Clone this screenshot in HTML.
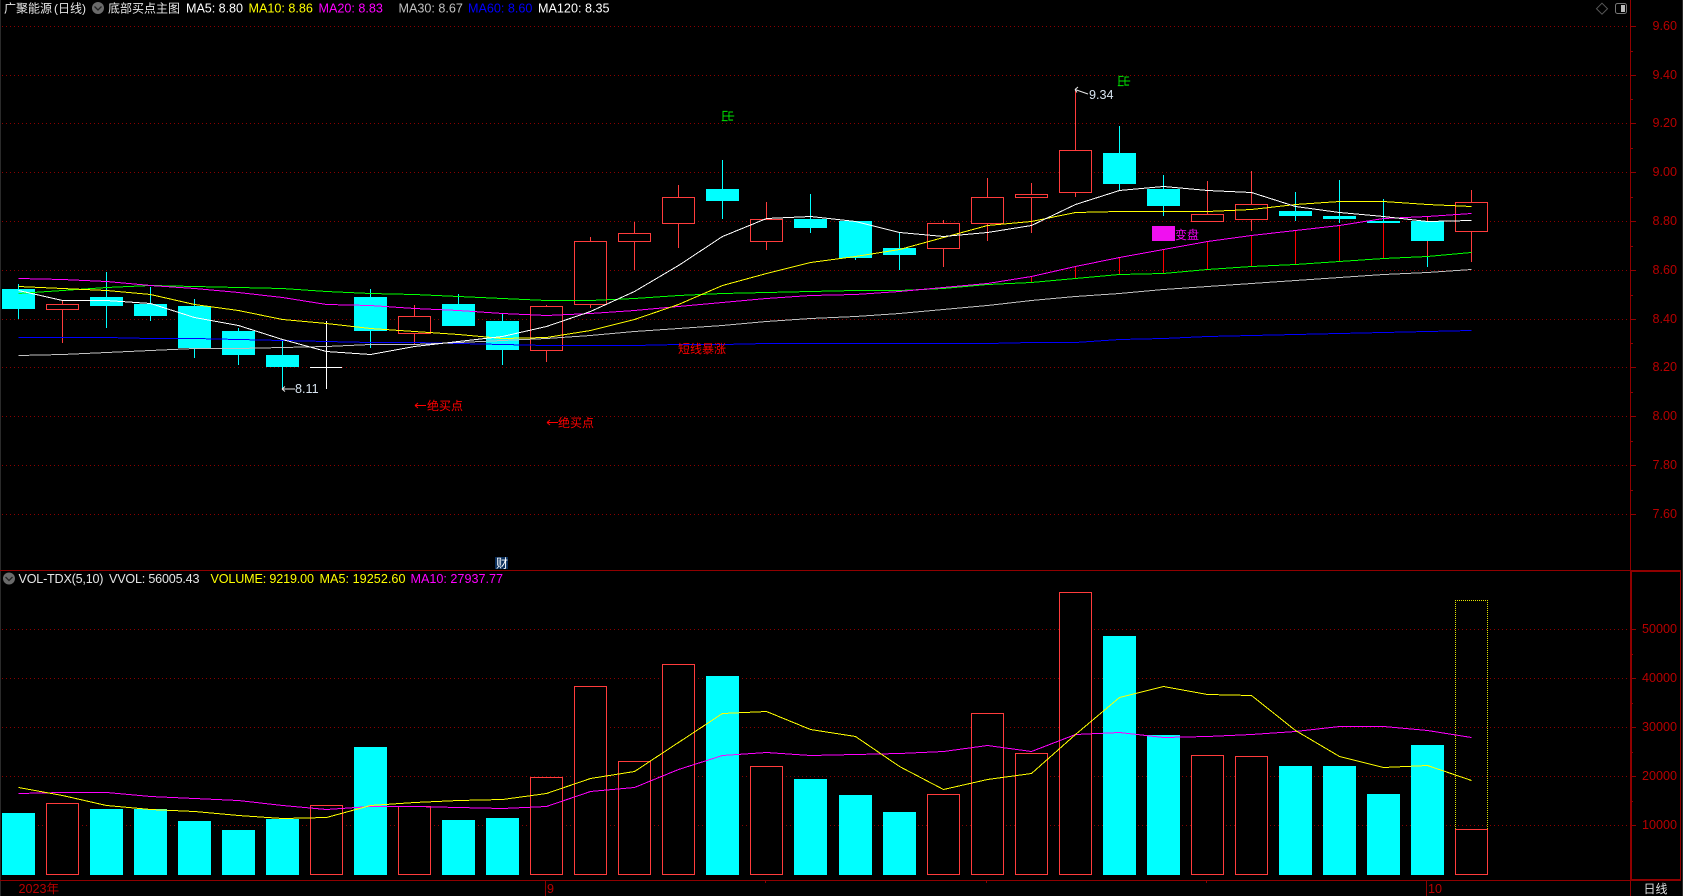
<!DOCTYPE html>
<html><head><meta charset="utf-8"><title>广聚能源</title>
<style>
html,body{margin:0;padding:0;background:#000;width:1683px;height:896px;overflow:hidden}
svg{display:block;position:absolute;left:0;top:0}
text{font-family:"Liberation Sans","WenQuanYi Zen Hei","Noto Sans CJK SC",sans-serif;font-size:12.6px}
.cj{font-size:12px}
.ax{fill:#b80000;text-anchor:end}
</style></head><body>
<svg width="1683" height="896" viewBox="0 0 1683 896" xmlns="http://www.w3.org/2000/svg">
<rect width="1683" height="896" fill="#000"/>
<rect x="0" y="0" width="1" height="896" fill="#2a2a2a"/>
<rect x="1682" y="0" width="1" height="896" fill="#2a2a2a"/>
<!-- grid -->
<g stroke="#8b0000" stroke-width="1" stroke-dasharray="1 3" shape-rendering="crispEdges">
<path d="M2 26.5H1630M2 75.5H1630M2 123.5H1630M2 172.5H1630M2 221.5H1630M2 270.5H1630M2 319.5H1630M2 367.5H1630M2 416.5H1630M2 465.5H1630M2 514.5H1630"/>
<path d="M2 629.5H1630M2 678.5H1630M2 727.5H1630M2 776.5H1630M2 825.5H1630"/>
</g>
<!-- frame -->
<g stroke="#900000" stroke-width="1" fill="none" shape-rendering="crispEdges">
<path d="M0 570.5H1681M0 880.5H1681M1630.5 0V896"/>
<path d="M1631.5 570V881M1631 571.5H1681M1680.5 570V881M1631 879.5H1681"/>
<path d="M1630 26.5H1636M1630 75.5H1636M1630 123.5H1636M1630 172.5H1636M1630 221.5H1636M1630 270.5H1636M1630 319.5H1636M1630 367.5H1636M1630 416.5H1636M1630 465.5H1636M1630 514.5H1636"/>
<path d="M1630 51.5H1633M1630 99.5H1633M1630 148.5H1633M1630 197.5H1633M1630 246.5H1633M1630 295.5H1633M1630 343.5H1633M1630 392.5H1633M1630 441.5H1633M1630 490.5H1633"/>
<path d="M1630 629.5H1636M1630 678.5H1636M1630 727.5H1636M1630 776.5H1636M1630 825.5H1636"/>
<path d="M1630 654.5H1633M1630 703.5H1633M1630 752.5H1633M1630 801.5H1633"/>
<path d="M545.5 880V896M1426.5 880V896M765.5 880V883M986.5 880V883M1206.5 880V883"/>
</g>
<!-- red sticks between MA20 and MA30 -->
<path shape-rendering="crispEdges" stroke="#ff0000" fill="none" d="M987.5 283V285M1031.5 276V282M1075.5 266V278M1119.5 258V274M1163.5 249V273M1207.5 242V269M1251.5 235V266M1295.5 231V264M1339.5 226V261M1383.5 218V258M1427.5 216V256"/>
<!-- wicks cyan -->
<path shape-rendering="crispEdges" stroke="#00ffff" fill="none" d="M18.5 284V319M106.5 272V328M150.5 287V321M194.5 299V358M238.5 328V365M282.5 339V389M370.5 289V348M458.5 294V326M502.5 313V365M722.5 160V219M810.5 194V233M855.5 221V260M899.5 232V270M1119.5 126V190M1163.5 175V216M1295.5 192V221M1339.5 180V223M1383.5 199V223M1427.5 256V267"/>
<!-- wicks red -->
<path shape-rendering="crispEdges" stroke="#ff3c3c" fill="none" d="M62.5 301V343M414.5 305V344M546.5 305V362M590.5 237V308M634.5 222V270M678.5 185V248M766.5 202V250M943.5 220V267M987.5 178V241M1031.5 183V233M1075.5 90V197M1207.5 181V214M1251.5 171V231M1471.5 190V262M1427.5 216V256"/>
<!-- cyan bodies -->
<path shape-rendering="crispEdges" fill="#00ffff" d="M2 289h33v20h-33zM90 297h33v9h-33zM134 304h33v12h-33zM178 306h33v42h-33zM222 331h33v24h-33zM266 355h33v12h-33zM354 297h33v34h-33zM442 304h33v22h-33zM486 321h33v29h-33zM706 189h33v12h-33zM794 219h33v9h-33zM839 221h33v37h-33zM883 248h33v7h-33zM1103 153h33v31h-33zM1147 189h33v17h-33zM1279 211h33v5h-33zM1323 216h33v3h-33zM1367 221h33v2h-33zM1411 221h33v20h-33z"/>
<!-- hollow red bodies -->
<g shape-rendering="crispEdges" fill="#000" stroke="#ff3c3c">
<rect x="46.5" y="304.5" width="32" height="5"/>
<rect x="398.5" y="316.5" width="32" height="17"/>
<rect x="530.5" y="306.5" width="32" height="44"/>
<rect x="574.5" y="241.5" width="32" height="63"/>
<rect x="618.5" y="233.5" width="32" height="8"/>
<rect x="662.5" y="197.5" width="32" height="26"/>
<rect x="750.5" y="219.5" width="32" height="22"/>
<rect x="927.5" y="223.5" width="32" height="25"/>
<rect x="971.5" y="197.5" width="32" height="26"/>
<rect x="1015.5" y="194.5" width="32" height="3"/>
<rect x="1059.5" y="150.5" width="32" height="42"/>
<rect x="1191.5" y="214.5" width="32" height="7"/>
<rect x="1235.5" y="204.5" width="32" height="15"/>
<rect x="1455.5" y="202.5" width="32" height="29"/>
</g>
<!-- current price cross -->
<path shape-rendering="crispEdges" stroke="#fff" fill="none" d="M310 367.5H342M326.5 321V389"/>
<!-- MAs -->
<g fill="none" stroke-width="1" shape-rendering="crispEdges">
<polyline stroke="#0000ff" points="18.5,337.5 62.5,337.5 106.5,337.5 150.5,338.5 194.5,338.5 238.5,339.5 282.5,340.5 326.5,341.5 370.5,342.5 414.5,342.5 458.5,343.5 502.5,344.5 546.5,345.5 590.5,345.5 634.5,345.5 678.5,344.5 722.5,344.5 766.5,343.5 810.5,343.5 855.5,343.5 899.5,343.5 943.5,343.5 987.5,343.5 1031.5,342.5 1075.5,342.5 1119.5,339.5 1163.5,338.5 1207.5,336.5 1251.5,335.5 1295.5,334.5 1339.5,333.5 1383.5,332.5 1427.5,331.5 1471.5,330.5"/>
<polyline stroke="#c0c0c0" points="18.5,355.5 62.5,354.5 106.5,352.5 150.5,350.5 194.5,348.5 238.5,348.5 282.5,347.5 326.5,346.5 370.5,344.5 414.5,344.5 458.5,342.5 502.5,340.5 546.5,338.5 590.5,335.5 634.5,331.5 678.5,328.5 722.5,325.5 766.5,321.5 810.5,318.5 855.5,316.5 899.5,313.5 943.5,309.5 987.5,305.5 1031.5,300.5 1075.5,296.5 1119.5,293.5 1163.5,289.5 1207.5,286.5 1251.5,283.5 1295.5,280.5 1339.5,277.5 1383.5,274.5 1427.5,272.5 1471.5,269.5"/>
<polyline stroke="#00ff00" points="18.5,293.5 62.5,290.5 106.5,287.5 150.5,285.5 194.5,286.5 238.5,287.5 282.5,288.5 326.5,291.5 370.5,293.5 414.5,294.5 458.5,296.5 502.5,298.5 546.5,300.5 590.5,300.5 634.5,298.5 678.5,295.5 722.5,293.5 766.5,292.5 810.5,291.5 855.5,290.5 899.5,290.5 943.5,288.5 987.5,284.5 1031.5,282.5 1075.5,278.5 1119.5,274.5 1163.5,273.5 1207.5,269.5 1251.5,266.5 1295.5,264.5 1339.5,261.5 1383.5,258.5 1427.5,256.5 1471.5,252.5"/>
<polyline stroke="#ff00ff" points="18.5,278.5 62.5,279.5 106.5,281.5 150.5,285.5 194.5,288.5 238.5,292.5 282.5,297.5 326.5,304.5 370.5,305.5 414.5,308.5 458.5,310.5 502.5,313.5 546.5,315.5 590.5,313.5 634.5,310.5 678.5,306.5 722.5,302.5 766.5,298.5 810.5,295.5 855.5,294.5 899.5,291.5 943.5,287.5 987.5,283.5 1031.5,276.5 1075.5,266.5 1119.5,257.5 1163.5,249.5 1207.5,241.5 1251.5,235.5 1295.5,230.5 1339.5,225.5 1383.5,218.5 1427.5,216.5 1471.5,213.5"/>
<polyline stroke="#ffff00" points="18.5,286.5 62.5,288.5 106.5,290.5 150.5,294.5 194.5,304.5 238.5,310.5 282.5,319.5 326.5,323.5 370.5,328.5 414.5,331.5 458.5,334.5 502.5,338.5 546.5,337.5 590.5,330.5 634.5,319.5 678.5,304.5 722.5,285.5 766.5,273.5 810.5,262.5 855.5,256.5 899.5,249.5 943.5,237.5 987.5,225.5 1031.5,221.5 1075.5,212.5 1119.5,211.5 1163.5,211.5 1207.5,211.5 1251.5,209.5 1295.5,204.5 1339.5,201.5 1383.5,201.5 1427.5,204.5 1471.5,206.5"/>
<polyline stroke="#ffffff" points="18.5,290.5 62.5,300.5 106.5,300.5 150.5,303.5 194.5,317.5 238.5,325.5 282.5,339.5 326.5,351.5 370.5,354.5 414.5,346.5 458.5,341.5 502.5,336.5 546.5,326.5 590.5,311.5 634.5,291.5 678.5,265.5 722.5,236.5 766.5,218.5 810.5,216.5 855.5,221.5 899.5,232.5 943.5,236.5 987.5,232.5 1031.5,225.5 1075.5,204.5 1119.5,190.5 1163.5,186.5 1207.5,190.5 1251.5,192.5 1295.5,206.5 1339.5,212.5 1383.5,216.5 1427.5,221.5 1471.5,220.5"/>
</g>
<!-- volume bars -->
<path shape-rendering="crispEdges" fill="#00ffff" d="M2 813h33v62h-33zM90 809h33v66h-33zM134 809h33v66h-33zM178 821h33v54h-33zM222 830h33v45h-33zM266 819h33v56h-33zM354 747h33v128h-33zM442 820h33v55h-33zM486 818h33v57h-33zM706 676h33v199h-33zM794 779h33v96h-33zM839 795h33v80h-33zM883 812h33v63h-33zM1103 636h33v239h-33zM1147 735h33v140h-33zM1279 766h33v109h-33zM1323 766h33v109h-33zM1367 794h33v81h-33zM1411 745h33v130h-33z"/>
<g shape-rendering="crispEdges" fill="#000" stroke="#ff3c3c">
<rect x="46.5" y="803.5" width="32" height="71"/>
<rect x="310.5" y="805.5" width="32" height="69"/>
<rect x="398.5" y="806.5" width="32" height="68"/>
<rect x="530.5" y="777.5" width="32" height="97"/>
<rect x="574.5" y="686.5" width="32" height="188"/>
<rect x="618.5" y="761.5" width="32" height="113"/>
<rect x="662.5" y="664.5" width="32" height="210"/>
<rect x="750.5" y="766.5" width="32" height="108"/>
<rect x="927.5" y="794.5" width="32" height="80"/>
<rect x="971.5" y="713.5" width="32" height="161"/>
<rect x="1015.5" y="753.5" width="32" height="121"/>
<rect x="1059.5" y="592.5" width="32" height="282"/>
<rect x="1191.5" y="755.5" width="32" height="119"/>
<rect x="1235.5" y="756.5" width="32" height="118"/>
</g>
<path shape-rendering="crispEdges" fill="none" stroke="#e6e600" stroke-dasharray="1 1" d="M1455.5 829V600.5H1487.5V829"/>
<rect x="1455.5" y="829.5" width="32" height="45" fill="#000" stroke="#ff3c3c" shape-rendering="crispEdges"/>
<g fill="none" shape-rendering="crispEdges">
<polyline stroke="#ff00ff" points="18.5,793.5 62.5,792.5 106.5,792.5 150.5,796.5 194.5,798.5 238.5,800.5 282.5,805.5 326.5,809.5 370.5,806.5 414.5,806.5 458.5,807.5 502.5,808.5 546.5,806.5 590.5,791.5 634.5,787.5 678.5,769.5 722.5,755.5 766.5,752.5 810.5,755.5 855.5,754.5 899.5,753.5 943.5,751.5 987.5,745.5 1031.5,751.5 1075.5,734.5 1119.5,732.5 1163.5,737.5 1207.5,736.5 1251.5,734.5 1295.5,731.5 1339.5,726.5 1383.5,726.5 1427.5,730.5 1471.5,737.5"/>
<polyline stroke="#ffff00" points="18.5,787.5 62.5,795.5 106.5,805.5 150.5,809.5 194.5,811.5 238.5,815.5 282.5,818.5 326.5,817.5 370.5,805.5 414.5,802.5 458.5,800.5 502.5,799.5 546.5,793.5 590.5,778.5 634.5,771.5 678.5,742.5 722.5,713.5 766.5,711.5 810.5,729.5 855.5,736.5 899.5,766.5 943.5,789.5 987.5,779.5 1031.5,773.5 1075.5,734.5 1119.5,697.5 1163.5,686.5 1207.5,694.5 1251.5,695.5 1295.5,730.5 1339.5,756.5 1383.5,767.5 1427.5,765.5 1471.5,780.5"/>
</g>
<!-- annotations -->
<path fill="none" stroke="#e8e8e8" d="M282 389H295M282 389L285 386.5M282 389L285 391.5"/>
<text x="295" y="393" fill="#d8e4f0">8.11</text>
<path fill="none" stroke="#e8e8e8" d="M1075 89.5L1088 94M1075 89.5L1078 87M1075 89.5L1077 92.5"/>
<text x="1089" y="99" fill="#d8e4f0">9.34</text>
<path fill="none" stroke="#f00" d="M415 405.5H426M415 405.5L418 403M415 405.5L418 408"/>
<text class="cj" x="427" y="410" fill="#f00">绝买点</text>
<path fill="none" stroke="#f00" d="M547 422.5H558M547 422.5L550 420M547 422.5L550 425"/>
<text class="cj" x="558" y="427" fill="#f00">绝买点</text>
<text class="cj" x="678" y="353" fill="#f00">短线暴涨</text>
<text style="font-size:13px" transform="translate(723,109.5) rotate(90)" fill="#00e000">出</text>
<text style="font-size:13px" transform="translate(1119,74.5) rotate(90)" fill="#00e000">出</text>
<rect x="1152" y="226" width="23" height="15" fill="#f010f0"/>
<text class="cj" x="1175" y="239" fill="#f000f0">变盘</text>
<rect x="495" y="557" width="13" height="12" fill="#0a2f5c"/>
<text class="cj" x="496" y="567.5" fill="#fff">财</text>
<!-- header -->
<text class="cj" x="4" y="12.5" fill="#e6e6e6">广聚能源</text>
<text class="cj" x="54" y="12.5" fill="#e6e6e6">(日线)</text>
<circle cx="98" cy="8" r="6" fill="#6a6a6a"/>
<path d="M94.5 6.5L98 10L101.5 6.5" fill="none" stroke="#222" stroke-width="1.3"/>
<text class="cj" x="108" y="12.5" fill="#e6e6e6">底部买点主图</text>
<text x="186" y="12.5" fill="#fff" textLength="57">MA5: 8.80</text>
<text x="248.5" y="12.5" fill="#ff0" textLength="64.4">MA10: 8.86</text>
<text x="318.5" y="12.5" fill="#f0f" textLength="64.4">MA20: 8.83</text>
<text x="398.5" y="12.5" fill="#c0c0c0" textLength="64.4">MA30: 8.67</text>
<text x="468" y="12.5" fill="#0000ff" textLength="64.4">MA60: 8.60</text>
<text x="538" y="12.5" fill="#fff" textLength="71.5">MA120: 8.35</text>
<!-- top right icons -->
<path d="M1602 3.2L1607.5 8.7L1602 14.2L1596.5 8.7Z" fill="none" stroke="#5a5a5a"/>
<rect x="1615.5" y="3.5" width="11" height="10" rx="2" fill="none" stroke="#777"/>
<rect x="1621" y="5" width="4" height="7" fill="#bbb"/>
<!-- right axis labels -->
<text class="ax" x="1677" y="30">9.60</text>
<text class="ax" x="1677" y="79">9.40</text>
<text class="ax" x="1677" y="127">9.20</text>
<text class="ax" x="1677" y="176">9.00</text>
<text class="ax" x="1677" y="225">8.80</text>
<text class="ax" x="1677" y="274">8.60</text>
<text class="ax" x="1677" y="323">8.40</text>
<text class="ax" x="1677" y="371">8.20</text>
<text class="ax" x="1677" y="420">8.00</text>
<text class="ax" x="1677" y="469">7.80</text>
<text class="ax" x="1677" y="518">7.60</text>
<text class="ax" x="1677" y="633">50000</text>
<text class="ax" x="1677" y="682">40000</text>
<text class="ax" x="1677" y="731">30000</text>
<text class="ax" x="1677" y="780">20000</text>
<text class="ax" x="1677" y="829">10000</text>
<!-- volume header -->
<circle cx="9" cy="578.5" r="6" fill="#6a6a6a"/>
<path d="M5.5 577L9 580.5L12.5 577" fill="none" stroke="#222" stroke-width="1.3"/>
<text x="18.5" y="583" fill="#e6e6e6" textLength="85">VOL-TDX(5,10)</text>
<text x="109" y="583" fill="#e6e6e6" textLength="90.5">VVOL: 56005.43</text>
<text x="210.5" y="583" fill="#ff0" textLength="103.5">VOLUME: 9219.00</text>
<text x="319.5" y="583" fill="#ff0" textLength="86">MA5: 19252.60</text>
<text x="410.5" y="583" fill="#f0f" textLength="92.5">MA10: 27937.77</text>
<!-- bottom axis -->
<text x="18.5" y="893" fill="#b80000">2023年</text>
<text x="547" y="893" fill="#b80000">9</text>
<text x="1428" y="893" fill="#b80000">10</text>
<text class="cj" x="1643.5" y="893" fill="#e0e0e0">日线</text>
</svg>
</body></html>
